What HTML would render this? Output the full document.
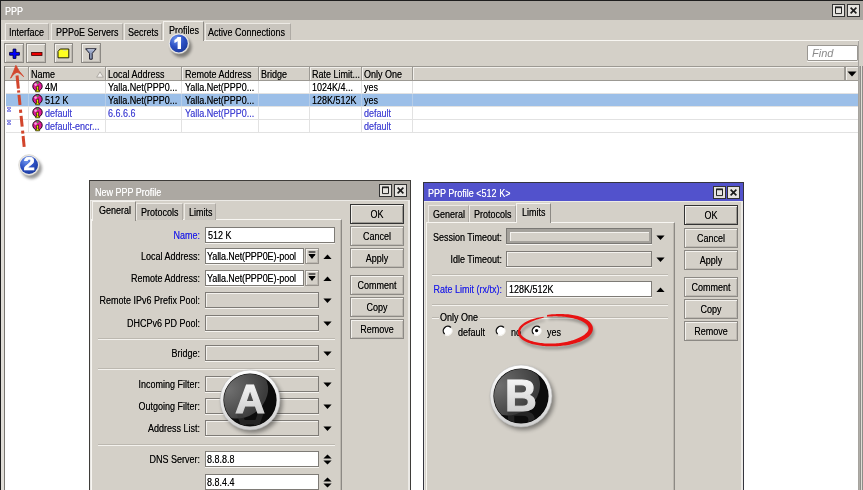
<!DOCTYPE html>
<html><head><meta charset="utf-8">
<style>
*{box-sizing:border-box;margin:0;padding:0}
html,body{width:863px;height:490px;overflow:hidden;background:#d4d0c8;position:relative}
body{will-change:transform}
div,span{position:absolute}
.t{font-family:"Liberation Sans",sans-serif;font-size:10px;line-height:12px;white-space:nowrap;color:#000;transform:scaleX(0.9);transform-origin:0 0;text-shadow:0 0 0.4px rgba(0,0,0,0.55)}
.w{color:#fff;text-shadow:0 0 0.5px rgba(255,255,255,0.7)}
.bl{color:#1c1ce8;text-shadow:0 0 0.5px rgba(28,28,232,0.6)}
.lk{color:#4444d4;text-shadow:0 0 0.5px rgba(68,68,212,0.6)}
.r{text-align:right;transform-origin:100% 0}
.c{text-align:center;transform-origin:50% 0}
.btn{border:1px solid #8c8984;box-shadow:inset 1px 1px 0 #f4f2ee,inset -1px -1px 0 #bdb9b2;background:#d4d0c8}
.tab{background:#c9c5be;border-top:1px solid #ece9e4;border-left:1px solid #ece9e4;border-right:1px solid #aeaaa4}
.tabA{background:#d4d0c8;border-top:1px solid #f4f2ee;border-left:1px solid #f4f2ee;border-right:1px solid #8c8984}
.in{background:#fff;border:1px solid #7e7b76;box-shadow:0 1px 0 #f6f4f0}
.dis{background:#d4d0c8;border:1px solid #7e7b76;box-shadow:inset 1px 1px 0 #f4f2ee,0 1px 0 #f6f4f0}
.sep{height:2px;border-top:1px solid #bcb8b0;border-bottom:1px solid #f4f2ee}
.tb{border:1px solid #3a3a3a;background:#d4d0c8;box-shadow:inset 1px 1px 0 #fff}
</style></head><body>

<!-- ============ MAIN PPP WINDOW ============ -->
<div style="left:0;top:0;width:863px;height:490px;border-top:1px solid #1e1e1e;border-left:1px solid #1e1e1e"></div>
<div style="left:1px;top:1px;width:862px;height:19px;background:#aca8a2"></div>
<div class="t w" style="left:5px;top:6px">PPP</div>
<svg style="position:absolute;left:832px;top:4px" width="13" height="13"><rect x="0.5" y="0.5" width="12" height="12" fill="#e6e4e0" stroke="#333" stroke-width="1"/><path d="M3.5 3.2 H9.5 V9.6 H3.5 Z" fill="none" stroke="#222" stroke-width="1"/><path d="M3 3.4 H10" stroke="#222" stroke-width="1.6"/></svg>
<svg style="position:absolute;left:847px;top:4px" width="13" height="13"><rect x="0.5" y="0.5" width="12" height="12" fill="#e6e4e0" stroke="#333" stroke-width="1"/><path d="M3.6 3.6 L9.4 9.4 M9.4 3.6 L3.6 9.4" stroke="#1a1a1a" stroke-width="1.6"/></svg>

<!-- tabs -->
<div style="left:1px;top:40px;width:858px;height:1px;background:#f8f6f2"></div>
<div class="tab" style="left:5px;top:23px;width:44px;height:17px"></div>
<div class="t" style="left:9px;top:27px">Interface</div>
<div class="tab" style="left:51px;top:23px;width:72px;height:17px"></div>
<div class="t" style="left:56px;top:27px">PPPoE Servers</div>
<div class="tab" style="left:124px;top:23px;width:38px;height:17px"></div>
<div class="t" style="left:128px;top:27px">Secrets</div>
<div class="tabA" style="left:163px;top:21px;width:41px;height:20px"></div>
<div class="t" style="left:169px;top:25px">Profiles</div>
<div class="tab" style="left:205px;top:23px;width:86px;height:17px"></div>
<div class="t" style="left:208px;top:27px">Active Connections</div>

<!-- toolbar -->
<div class="btn" style="left:4px;top:43px;width:20px;height:20px"></div>
<div class="btn" style="left:26px;top:43px;width:20px;height:20px"></div>
<div class="btn" style="left:54px;top:43px;width:19px;height:20px"></div>
<div class="btn" style="left:81px;top:43px;width:20px;height:20px"></div>
<div class="in" style="left:807px;top:45px;width:51px;height:16px;border-color:#9a9792;border-radius:1px"></div>
<div class="t" style="left:812px;top:47px;color:#8a8a8a;font-style:italic;font-size:11px;transform:none;text-shadow:none">Find</div>

<!-- table -->
<div style="left:1px;top:41px;width:3px;height:449px;background:#e0ddd7"></div>
<div style="left:4px;top:66px;width:854px;height:424px;background:#fff;border-left:1px solid #7a7772"></div>
<div style="left:858px;top:41px;width:1px;height:449px;background:#a6a39e"></div>
<div style="left:859px;top:66px;width:1px;height:424px;background:#b0aea8"></div>
<div style="left:860px;top:66px;width:1px;height:424px;background:#8e8c88"></div>
<div style="left:861px;top:66px;width:1px;height:424px;background:#e0ddd5"></div>
<div style="left:862px;top:66px;width:1px;height:424px;background:#8e8c88"></div>

<!--TOOLICONS-->
<svg style="position:absolute;left:9px;top:48px" width="12" height="12"><path d="M4.1 1.1 H6.9 V4.4 H10.4 V7.2 H6.9 V10.4 H4.1 V7.2 H0.6 V4.4 H4.1 Z" fill="#0000ff" stroke="#000040" stroke-width="0.9"/></svg>
<svg style="position:absolute;left:31px;top:52px" width="12" height="5"><rect x="0.6" y="0.4" width="10.4" height="3" fill="#ee0000" stroke="#400000" stroke-width="0.8"/></svg>
<svg style="position:absolute;left:57px;top:48px" width="13" height="11"><path d="M3.2 1 H11.8 V9.8 H1 V3.4 Z" fill="#ffff20" stroke="#202000" stroke-width="1"/><path d="M6 2.4 H10" stroke="#d8d8a0" stroke-width="0.8"/></svg>
<svg style="position:absolute;left:85px;top:48px" width="12" height="12"><path d="M0.6 0.8 H11.2 L7.2 5.4 V11.2 H4.6 V5.4 Z" fill="#9aa8c8" stroke="#1a1a2a" stroke-width="1"/><path d="M2.6 1.8 H9.2" stroke="#dfe6f4" stroke-width="0.8"/></svg>
<!--/TOOLICONS-->
<!--TABLE-->
<div style="left:5px;top:66px;width:853px;height:15px;background:#d4d0c8;border-top:1px solid #9c9993;border-bottom:1px solid #9c9993;box-shadow:inset 0 1px 0 #f2f0ec"></div>
<div style="left:28px;top:67px;width:1px;height:13px;background:#9c9993"></div>
<div style="left:29px;top:67px;width:1px;height:13px;background:#f2f0ec"></div>
<div style="left:105px;top:67px;width:1px;height:13px;background:#9c9993"></div>
<div style="left:106px;top:67px;width:1px;height:13px;background:#f2f0ec"></div>
<div style="left:181px;top:67px;width:1px;height:13px;background:#9c9993"></div>
<div style="left:182px;top:67px;width:1px;height:13px;background:#f2f0ec"></div>
<div style="left:258px;top:67px;width:1px;height:13px;background:#9c9993"></div>
<div style="left:259px;top:67px;width:1px;height:13px;background:#f2f0ec"></div>
<div style="left:309px;top:67px;width:1px;height:13px;background:#9c9993"></div>
<div style="left:310px;top:67px;width:1px;height:13px;background:#f2f0ec"></div>
<div style="left:361px;top:67px;width:1px;height:13px;background:#9c9993"></div>
<div style="left:362px;top:67px;width:1px;height:13px;background:#f2f0ec"></div>
<div style="left:412px;top:67px;width:1px;height:13px;background:#9c9993"></div>
<div style="left:413px;top:67px;width:1px;height:13px;background:#f2f0ec"></div>
<div style="left:844px;top:67px;width:1px;height:13px;background:#9c9993"></div>
<div style="left:845px;top:67px;width:1px;height:13px;background:#f2f0ec"></div>
<div style="left:28px;top:81px;width:1px;height:52px;background:#e2e2e2"></div>
<div style="left:105px;top:81px;width:1px;height:52px;background:#e2e2e2"></div>
<div style="left:181px;top:81px;width:1px;height:52px;background:#e2e2e2"></div>
<div style="left:258px;top:81px;width:1px;height:52px;background:#e2e2e2"></div>
<div style="left:309px;top:81px;width:1px;height:52px;background:#e2e2e2"></div>
<div style="left:361px;top:81px;width:1px;height:52px;background:#e2e2e2"></div>
<div style="left:412px;top:81px;width:1px;height:52px;background:#e2e2e2"></div>

<div style="left:6px;top:93px;width:852px;height:1px;background:#e2e2e2"></div>
<div style="left:6px;top:106px;width:852px;height:1px;background:#e2e2e2"></div>
<div style="left:6px;top:119px;width:852px;height:1px;background:#e2e2e2"></div>
<div style="left:6px;top:132px;width:852px;height:1px;background:#e2e2e2"></div>
<div style="left:6px;top:94px;width:852px;height:12px;background:#9cbfe8"></div>
<div style="left:28px;top:94px;width:1px;height:12px;background:#b6cde8"></div>
<div style="left:105px;top:94px;width:1px;height:12px;background:#b6cde8"></div>
<div style="left:181px;top:94px;width:1px;height:12px;background:#b6cde8"></div>
<div style="left:258px;top:94px;width:1px;height:12px;background:#b6cde8"></div>
<div style="left:309px;top:94px;width:1px;height:12px;background:#b6cde8"></div>
<div style="left:361px;top:94px;width:1px;height:12px;background:#b6cde8"></div>
<div style="left:412px;top:94px;width:1px;height:12px;background:#b6cde8"></div>

<div class="t" style="left:31px;top:69px">Name</div>
<div class="t" style="left:108px;top:69px">Local Address</div>
<div class="t" style="left:185px;top:69px">Remote Address</div>
<div class="t" style="left:261px;top:69px">Bridge</div>
<div class="t" style="left:312px;top:69px">Rate Limit...</div>
<div class="t" style="left:364px;top:69px">Only One</div>
<svg style="position:absolute;left:96px;top:71px" width="8" height="7"><path d="M4 0.8 L7.3 6.2 L0.7 6.2 Z" fill="#f4f2ee" stroke="#a8a49e" stroke-width="0.9"/></svg>
<div style="left:845px;top:67px;width:13px;height:13px;border-left:1px solid #9c9993;box-shadow:inset 1px 0 0 #f2f0ec"></div>
<svg style="position:absolute;left:847px;top:71px" width="10" height="6"><path d="M0.5 0.5 L9.5 0.5 L5 5.5 Z" fill="#000"/></svg>
<svg style="position:absolute;left:32px;top:81px" width="12" height="12"><circle cx="5.5" cy="5.3" r="4.7" fill="#e0189a" stroke="#1a0812" stroke-width="1"/><circle cx="3.6" cy="3.6" r="1.3" fill="#f8a0d8"/><circle cx="5.6" cy="2" r="1" fill="#3cb040"/><path d="M4.3 5.8 L6.4 4.8 L6.4 9.3 L7.6 9.3 L7.6 10.8 L3.6 10.8 L3.6 9.3 L4.8 9.3 L4.8 7.4 L4.3 7.6 Z" fill="#f8f400" stroke="#181800" stroke-width="0.7"/></svg>
<div class="t" style="left:45px;top:82px">4M</div>
<div class="t" style="left:108px;top:82px">Yalla.Net(PPP0...</div>
<div class="t" style="left:185px;top:82px">Yalla.Net(PPP0...</div>
<div class="t" style="left:312px;top:82px">1024K/4...</div>
<div class="t" style="left:364px;top:82px">yes</div>
<svg style="position:absolute;left:32px;top:94px" width="12" height="12"><circle cx="5.5" cy="5.3" r="4.7" fill="#e0189a" stroke="#1a0812" stroke-width="1"/><circle cx="3.6" cy="3.6" r="1.3" fill="#f8a0d8"/><circle cx="5.6" cy="2" r="1" fill="#3cb040"/><path d="M4.3 5.8 L6.4 4.8 L6.4 9.3 L7.6 9.3 L7.6 10.8 L3.6 10.8 L3.6 9.3 L4.8 9.3 L4.8 7.4 L4.3 7.6 Z" fill="#f8f400" stroke="#181800" stroke-width="0.7"/></svg>
<div class="t" style="left:45px;top:95px">512 K</div>
<div class="t" style="left:108px;top:95px">Yalla.Net(PPP0...</div>
<div class="t" style="left:185px;top:95px">Yalla.Net(PPP0...</div>
<div class="t" style="left:312px;top:95px">128K/512K</div>
<div class="t" style="left:364px;top:95px">yes</div>
<svg style="position:absolute;left:6px;top:107px" width="6" height="5"><path d="M1 0.8 L5 4.2 M5 0.8 L1 4.2 M1 0.8 H5 M1 4.2 H5" stroke="#7070e0" stroke-width="1"/></svg>
<svg style="position:absolute;left:32px;top:107px" width="12" height="12"><circle cx="5.5" cy="5.3" r="4.7" fill="#e0189a" stroke="#1a0812" stroke-width="1"/><circle cx="3.6" cy="3.6" r="1.3" fill="#f8a0d8"/><circle cx="5.6" cy="2" r="1" fill="#3cb040"/><path d="M4.3 5.8 L6.4 4.8 L6.4 9.3 L7.6 9.3 L7.6 10.8 L3.6 10.8 L3.6 9.3 L4.8 9.3 L4.8 7.4 L4.3 7.6 Z" fill="#f8f400" stroke="#181800" stroke-width="0.7"/></svg>
<div class="t lk" style="left:45px;top:108px">default</div>
<div class="t lk" style="left:108px;top:108px">6.6.6.6</div>
<div class="t lk" style="left:185px;top:108px">Yalla.Net(PPP0...</div>
<div class="t lk" style="left:364px;top:108px">default</div>
<svg style="position:absolute;left:6px;top:120px" width="6" height="5"><path d="M1 0.8 L5 4.2 M5 0.8 L1 4.2 M1 0.8 H5 M1 4.2 H5" stroke="#7070e0" stroke-width="1"/></svg>
<svg style="position:absolute;left:32px;top:120px" width="12" height="12"><circle cx="5.5" cy="5.3" r="4.7" fill="#e0189a" stroke="#1a0812" stroke-width="1"/><circle cx="3.6" cy="3.6" r="1.3" fill="#f8a0d8"/><circle cx="5.6" cy="2" r="1" fill="#3cb040"/><path d="M4.3 5.8 L6.4 4.8 L6.4 9.3 L7.6 9.3 L7.6 10.8 L3.6 10.8 L3.6 9.3 L4.8 9.3 L4.8 7.4 L4.3 7.6 Z" fill="#f8f400" stroke="#181800" stroke-width="0.7"/></svg>
<div class="t lk" style="left:45px;top:121px">default-encr...</div>
<div class="t lk" style="left:364px;top:121px">default</div>
<!--/TABLE-->
<!--MARKERS-->
<svg style="position:absolute;left:0;top:60px" width="40" height="95">
<path d="M17.05 15.50 L18.37 28.70 M18.53 30.30 L18.76 32.60 M18.99 34.90 L20.00 45.00 M20.47 49.70 L20.78 52.80 M21.09 55.90 L22.17 66.70 M22.56 70.60 L22.87 73.70 M23.10 76.00 L24.19 86.90" stroke="#d2452c" stroke-width="3" fill="none"/>
<path d="M10.6 18.2 Q14.2 10.5 15.9 5.4 Q18.6 11.2 23.6 16.6 Q19.6 12.4 17 12.2 Q13.8 13.2 10.6 18.2 Z" fill="#d2452c" stroke="#d2452c" stroke-width="0.9" stroke-linejoin="round"/>
</svg>
<svg style="position:absolute;left:165px;top:30px" width="32" height="32"><g transform="translate(-0.2,-0.6)">
<defs><radialGradient id="g1" cx="35%" cy="25%" r="80%"><stop offset="0" stop-color="#6f96ee"/><stop offset="0.55" stop-color="#2c50c4"/><stop offset="1" stop-color="#1c3a9c"/></radialGradient>
<filter id="f1" x="-50%" y="-50%" width="200%" height="200%"><feGaussianBlur stdDeviation="1.5"/></filter></defs>
<circle cx="16.5" cy="17.5" r="10.4" fill="#000" opacity="0.4" filter="url(#f1)"/>
<circle cx="14" cy="14" r="10.4" fill="#eceae6" stroke="#c8c6c0" stroke-width="0.5"/>
<circle cx="14" cy="14" r="9.0" fill="url(#g1)"/>
<path d="M12.8 7.6 H16.2 V19.6 H12.8 V11.8 Q11.3 13 9.6 13.5 V10.6 Q11.9 9.6 12.8 7.6 Z" fill="#fff"/>
</g></svg>
<svg style="position:absolute;left:15px;top:151px" width="32" height="32">
<defs><radialGradient id="g2" cx="35%" cy="25%" r="80%"><stop offset="0" stop-color="#6f96ee"/><stop offset="0.55" stop-color="#2c50c4"/><stop offset="1" stop-color="#1c3a9c"/></radialGradient>
<filter id="f2" x="-50%" y="-50%" width="200%" height="200%"><feGaussianBlur stdDeviation="1.5"/></filter></defs>
<circle cx="16.5" cy="17.5" r="10.4" fill="#000" opacity="0.4" filter="url(#f2)"/>
<circle cx="14" cy="14" r="10.4" fill="#eceae6" stroke="#c8c6c0" stroke-width="0.5"/>
<circle cx="14" cy="14" r="9.0" fill="url(#g2)"/>
<text x="14.2" y="19.4" text-anchor="middle" font-family="Liberation Sans" font-weight="bold" font-size="17.5" fill="#fff" stroke="#fff" stroke-width="0.7" transform="translate(14.2 14) scale(1.12 1) translate(-14.2 -14)">2</text>
</svg>
<!--/MARKERS-->
<!--DLGA-->
<div style="left:89px;top:180px;width:322px;height:320px;background:#d4d0c8;border:1px solid #3e3c39;box-shadow:inset 1px 1px 0 #e8e6e2,inset -2px 0 0 #eceae6"></div>
<div style="left:90px;top:181px;width:320px;height:19px;background:#aca8a2"></div>
<div class="t w" style="left:95px;top:187px">New PPP Profile</div>
<div style="left:90px;top:200px;width:320px;height:1px;background:#eceae6"></div>
<svg style="position:absolute;left:379px;top:184px" width="13" height="13"><rect x="0.5" y="0.5" width="12" height="12" fill="#e6e4e0" stroke="#333" stroke-width="1"/><path d="M3.5 3.2 H9.5 V9.6 H3.5 Z" fill="none" stroke="#222" stroke-width="1"/><path d="M3 3.4 H10" stroke="#222" stroke-width="1.6"/></svg>
<svg style="position:absolute;left:394px;top:184px" width="13" height="13"><rect x="0.5" y="0.5" width="12" height="12" fill="#e6e4e0" stroke="#333" stroke-width="1"/><path d="M3.6 3.6 L9.4 9.4 M9.4 3.6 L3.6 9.4" stroke="#1a1a1a" stroke-width="1.6"/></svg>
<div style="left:91px;top:219px;width:251px;height:290px;border-top:1px solid #f8f6f2;border-left:1px solid #f8f6f2;border-right:1px solid #8c8984;box-shadow:inset -1px 0 0 #bcb8b0"></div>
<div class="tabA" style="left:92px;top:201px;width:44px;height:20px"></div>
<div class="t" style="left:99px;top:205px">General</div>
<div class="tab" style="left:136px;top:203px;width:47px;height:17px"></div>
<div class="t" style="left:141px;top:207px">Protocols</div>
<div class="tab" style="left:184px;top:203px;width:32px;height:17px"></div>
<div class="t" style="left:189px;top:207px">Limits</div>
<div class="t bl r" style="left:50px;top:230px;width:150px">Name:</div>
<div class="in" style="left:205px;top:227px;width:130px;height:16px"></div>
<div class="t" style="left:208px;top:230px">512 K</div>
<div class="t r" style="left:50px;top:251px;width:150px">Local Address:</div>
<div class="in" style="left:205px;top:248px;width:99px;height:16px"></div>
<div class="t" style="left:207px;top:251px;letter-spacing:-0.1px">Yalla.Net(PPP0E)-pool</div>
<div class="btn" style="left:305px;top:248px;width:14px;height:16px;border-color:#96928c"></div>
<svg style="position:absolute;left:307px;top:251px" width="10" height="10"><path d="M1.6 1 H8.4" stroke="#222" stroke-width="1.3"/><path d="M1.4 3 H8.6 L5 8 Z M3 3 H7" fill="#000"/><path d="M2.2 4.2 H7.8" stroke="#000" stroke-width="1.2"/></svg>
<svg style="position:absolute;left:323px;top:254px" width="10" height="6"><path d="M0.4 5 L8.6 5 L4.5 0.6 Z" fill="#000"/></svg>
<div class="t r" style="left:50px;top:273px;width:150px">Remote Address:</div>
<div class="in" style="left:205px;top:270px;width:99px;height:16px"></div>
<div class="t" style="left:207px;top:273px;letter-spacing:-0.1px">Yalla.Net(PPP0E)-pool</div>
<div class="btn" style="left:305px;top:270px;width:14px;height:16px;border-color:#96928c"></div>
<svg style="position:absolute;left:307px;top:273px" width="10" height="10"><path d="M1.6 1 H8.4" stroke="#222" stroke-width="1.3"/><path d="M1.4 3 H8.6 L5 8 Z M3 3 H7" fill="#000"/><path d="M2.2 4.2 H7.8" stroke="#000" stroke-width="1.2"/></svg>
<svg style="position:absolute;left:323px;top:276px" width="10" height="6"><path d="M0.4 5 L8.6 5 L4.5 0.6 Z" fill="#000"/></svg>
<div class="t r" style="left:50px;top:295px;width:150px">Remote IPv6 Prefix Pool:</div>
<div class="dis" style="left:205px;top:292px;width:114px;height:16px"></div>
<svg style="position:absolute;left:323px;top:298px" width="10" height="6"><path d="M0.4 0.6 L8.6 0.6 L4.5 5 Z" fill="#000"/></svg>
<div class="t r" style="left:50px;top:318px;width:150px">DHCPv6 PD Pool:</div>
<div class="dis" style="left:205px;top:315px;width:114px;height:16px"></div>
<svg style="position:absolute;left:323px;top:321px" width="10" height="6"><path d="M0.4 0.6 L8.6 0.6 L4.5 5 Z" fill="#000"/></svg>
<div class="t r" style="left:50px;top:348px;width:150px">Bridge:</div>
<div class="dis" style="left:205px;top:345px;width:114px;height:16px"></div>
<svg style="position:absolute;left:323px;top:351px" width="10" height="6"><path d="M0.4 0.6 L8.6 0.6 L4.5 5 Z" fill="#000"/></svg>
<div class="t r" style="left:50px;top:379px;width:150px">Incoming Filter:</div>
<div class="dis" style="left:205px;top:376px;width:114px;height:16px"></div>
<svg style="position:absolute;left:323px;top:382px" width="10" height="6"><path d="M0.4 0.6 L8.6 0.6 L4.5 5 Z" fill="#000"/></svg>
<div class="t r" style="left:50px;top:401px;width:150px">Outgoing Filter:</div>
<div class="dis" style="left:205px;top:398px;width:114px;height:16px"></div>
<svg style="position:absolute;left:323px;top:404px" width="10" height="6"><path d="M0.4 0.6 L8.6 0.6 L4.5 5 Z" fill="#000"/></svg>
<div class="t r" style="left:50px;top:423px;width:150px">Address List:</div>
<div class="dis" style="left:205px;top:420px;width:114px;height:16px"></div>
<svg style="position:absolute;left:323px;top:426px" width="10" height="6"><path d="M0.4 0.6 L8.6 0.6 L4.5 5 Z" fill="#000"/></svg>
<div class="sep" style="left:98px;top:338px;width:237px"></div>
<div class="sep" style="left:98px;top:368px;width:237px"></div>
<div class="sep" style="left:98px;top:444px;width:237px"></div>
<div class="t r" style="left:50px;top:454px;width:150px">DNS Server:</div>
<div class="in" style="left:205px;top:451px;width:114px;height:16px"></div>
<div class="t" style="left:207px;top:454px">8.8.8.8</div>
<svg style="position:absolute;left:323px;top:454px" width="10" height="12"><path d="M0.4 4.5 L8.6 4.5 L4.5 0.4 Z M0.4 6.5 L8.6 6.5 L4.5 10.6 Z" fill="#000"/></svg>
<div class="in" style="left:205px;top:474px;width:114px;height:16px"></div>
<div class="t" style="left:207px;top:477px">8.8.4.4</div>
<svg style="position:absolute;left:323px;top:477px" width="10" height="12"><path d="M0.4 4.5 L8.6 4.5 L4.5 0.4 Z M0.4 6.5 L8.6 6.5 L4.5 10.6 Z" fill="#000"/></svg>
<div class="btn" style="left:350px;top:204px;width:54px;height:20px;border-color:#333;box-shadow:inset 1px 1px 0 #f4f2ee,inset -1px -1px 0 #9c9993"></div>
<div class="t c" style="left:350px;top:209px;width:54px">OK</div>
<div class="btn" style="left:350px;top:226px;width:54px;height:20px;"></div>
<div class="t c" style="left:350px;top:231px;width:54px">Cancel</div>
<div class="btn" style="left:350px;top:248px;width:54px;height:20px;"></div>
<div class="t c" style="left:350px;top:253px;width:54px">Apply</div>
<div class="btn" style="left:350px;top:275px;width:54px;height:20px;"></div>
<div class="t c" style="left:350px;top:280px;width:54px">Comment</div>
<div class="btn" style="left:350px;top:297px;width:54px;height:20px;"></div>
<div class="t c" style="left:350px;top:302px;width:54px">Copy</div>
<div class="btn" style="left:350px;top:319px;width:54px;height:20px;"></div>
<div class="t c" style="left:350px;top:324px;width:54px">Remove</div>
<!--/DLGA-->
<!--DLGB-->
<div style="left:423px;top:182px;width:321px;height:320px;background:#d4d0c8;border:1px solid #34343e;box-shadow:inset 1px 1px 0 #e8e6e2,inset -2px 0 0 #eceae6"></div>
<div style="left:424px;top:183px;width:319px;height:18px;background:#5252cc"></div>
<div class="t w" style="left:428px;top:188px">PPP Profile &lt;512 K&gt;</div>
<div style="left:424px;top:201px;width:319px;height:1px;background:#ecebe6"></div>
<svg style="position:absolute;left:713px;top:186px" width="13" height="13"><rect x="0.5" y="0.5" width="12" height="12" fill="#e6e4e0" stroke="#333" stroke-width="1"/><path d="M3.5 3.2 H9.5 V9.6 H3.5 Z" fill="none" stroke="#222" stroke-width="1"/><path d="M3 3.4 H10" stroke="#222" stroke-width="1.6"/></svg>
<svg style="position:absolute;left:727px;top:186px" width="13" height="13"><rect x="0.5" y="0.5" width="12" height="12" fill="#e6e4e0" stroke="#333" stroke-width="1"/><path d="M3.6 3.6 L9.4 9.4 M9.4 3.6 L3.6 9.4" stroke="#1a1a1a" stroke-width="1.6"/></svg>
<div style="left:426px;top:222px;width:249px;height:290px;border-top:1px solid #f8f6f2;border-left:1px solid #f8f6f2;border-right:1px solid #8c8984;box-shadow:inset -1px 0 0 #bcb8b0"></div>
<div class="tab" style="left:428px;top:205px;width:41px;height:17px"></div>
<div class="t" style="left:433px;top:209px">General</div>
<div class="tab" style="left:469px;top:205px;width:47px;height:17px"></div>
<div class="t" style="left:474px;top:209px">Protocols</div>
<div class="tabA" style="left:516px;top:203px;width:35px;height:20px"></div>
<div class="t" style="left:522px;top:207px">Limits</div>
<div class="t r" style="left:352px;top:232px;width:150px">Session Timeout:</div>
<div style="left:506px;top:228px;width:146px;height:16px;background:#d4d0c8;border:1px solid #7a7874;box-shadow:inset 0 0 0 2px #a4a19b,inset 3px 3px 0 #a4a19b,inset 4px 4px 0 #f4f2ee,0 1px 0 #f6f4f0"></div>
<svg style="position:absolute;left:656px;top:235px" width="10" height="6"><path d="M0.4 0.6 L8.6 0.6 L4.5 5 Z" fill="#000"/></svg>
<div class="t r" style="left:352px;top:254px;width:150px">Idle Timeout:</div>
<div class="dis" style="left:506px;top:251px;width:146px;height:16px"></div>
<svg style="position:absolute;left:656px;top:257px" width="10" height="6"><path d="M0.4 0.6 L8.6 0.6 L4.5 5 Z" fill="#000"/></svg>
<div class="sep" style="left:432px;top:274px;width:236px"></div>
<div class="t bl r" style="left:352px;top:284px;width:150px">Rate Limit (rx/tx):</div>
<div class="in" style="left:506px;top:281px;width:146px;height:16px"></div>
<div class="t" style="left:509px;top:284px">128K/512K</div>
<svg style="position:absolute;left:656px;top:287px" width="10" height="6"><path d="M0.4 5 L8.6 5 L4.5 0.6 Z" fill="#000"/></svg>
<div class="sep" style="left:432px;top:304px;width:236px"></div>
<div style="left:432px;top:317px;width:7px;height:2px;border-top:1px solid #bcb8b0;border-bottom:1px solid #f4f2ee"></div>
<div style="left:480px;top:317px;width:188px;height:2px;border-top:1px solid #bcb8b0;border-bottom:1px solid #f4f2ee"></div>
<div class="t" style="left:440px;top:312px">Only One</div>
<svg style="position:absolute;left:441px;top:325px" width="12" height="12"><circle cx="6.6" cy="5.6" r="4.5" fill="#fff"/><path d="M3.6 9 A4.4 4.4 0 0 1 9.9 2.6" stroke="#111" stroke-width="1.4" fill="none"/><path d="M10.8 4 A4.8 4.8 0 0 1 4 10" stroke="#f8f6f2" stroke-width="1" fill="none"/></svg>
<div class="t" style="left:458px;top:327px">default</div>
<svg style="position:absolute;left:494px;top:325px" width="12" height="12"><circle cx="6.6" cy="5.6" r="4.5" fill="#fff"/><path d="M3.6 9 A4.4 4.4 0 0 1 9.9 2.6" stroke="#111" stroke-width="1.4" fill="none"/><path d="M10.8 4 A4.8 4.8 0 0 1 4 10" stroke="#f8f6f2" stroke-width="1" fill="none"/></svg>
<div class="t" style="left:511px;top:327px">no</div>
<svg style="position:absolute;left:530px;top:325px" width="12" height="12"><circle cx="6.6" cy="5.6" r="4.5" fill="#fff"/><path d="M3.6 9 A4.4 4.4 0 0 1 9.9 2.6" stroke="#111" stroke-width="1.4" fill="none"/><path d="M10.8 4 A4.8 4.8 0 0 1 4 10" stroke="#f8f6f2" stroke-width="1" fill="none"/><circle cx="6.6" cy="5.6" r="1.6" fill="#000"/></svg>
<div class="t" style="left:547px;top:327px">yes</div>
<div class="btn" style="left:684px;top:205px;width:54px;height:20px;border-color:#333;box-shadow:inset 1px 1px 0 #f4f2ee,inset -1px -1px 0 #9c9993"></div>
<div class="t c" style="left:684px;top:210px;width:54px">OK</div>
<div class="btn" style="left:684px;top:228px;width:54px;height:20px;"></div>
<div class="t c" style="left:684px;top:233px;width:54px">Cancel</div>
<div class="btn" style="left:684px;top:250px;width:54px;height:20px;"></div>
<div class="t c" style="left:684px;top:255px;width:54px">Apply</div>
<div class="btn" style="left:684px;top:277px;width:54px;height:20px;"></div>
<div class="t c" style="left:684px;top:282px;width:54px">Comment</div>
<div class="btn" style="left:684px;top:299px;width:54px;height:20px;"></div>
<div class="t c" style="left:684px;top:304px;width:54px">Copy</div>
<div class="btn" style="left:684px;top:321px;width:54px;height:20px;"></div>
<div class="t c" style="left:684px;top:326px;width:54px">Remove</div>
<!--/DLGB-->
<!--BADGES-->
<svg style="position:absolute;left:214px;top:364px;will-change:transform" width="76" height="76">
<defs>
<linearGradient id="ringa" x1="0" y1="0" x2="0" y2="1"><stop offset="0" stop-color="#ffffff"/><stop offset="1" stop-color="#d0d0d0"/></linearGradient>
<radialGradient id="gla" cx="35%" cy="30%" r="70%"><stop offset="0" stop-color="#707070"/><stop offset="0.7" stop-color="#4c4c4c"/><stop offset="1" stop-color="#3c3c3c"/></radialGradient>
<linearGradient id="lta" x1="0" y1="0" x2="0" y2="1"><stop offset="0" stop-color="#ffffff"/><stop offset="1" stop-color="#c4c4c4"/></linearGradient>
<clipPath id="cpa"><circle cx="36" cy="36" r="26"/></clipPath>
<filter id="bsa" x="-30%" y="-30%" width="160%" height="160%"><feGaussianBlur stdDeviation="2.2"/></filter>
</defs>
<circle cx="38.5" cy="39" r="30" fill="#000" opacity="0.4" filter="url(#bsa)"/>
<circle cx="36" cy="36" r="30" fill="url(#ringa)" stroke="#b8b8b8" stroke-width="0.6"/>
<circle cx="36" cy="36" r="26.6" fill="#050505"/>
<g clip-path="url(#cpa)">
<circle cx="36" cy="36" r="30" fill="#0c0c0c"/>
<ellipse cx="27" cy="29" rx="28.5" ry="24.0" transform="rotate(-35 27 29)" fill="url(#gla)"/>
<text x="36" y="48.8" text-anchor="middle" font-family="Liberation Sans" font-weight="bold" font-size="41" fill="#3a3a3a" opacity="0.55" transform="translate(0,97.6) scale(1,-1)">A</text>
</g>
<text x="36" y="48.8" text-anchor="middle" font-family="Liberation Sans" font-weight="bold" font-size="41" fill="url(#lta)" stroke="url(#lta)" stroke-width="1.2">A</text>
</svg>
<svg style="position:absolute;left:484px;top:359px;will-change:transform" width="78" height="78">
<defs>
<linearGradient id="ringb" x1="0" y1="0" x2="0" y2="1"><stop offset="0" stop-color="#ffffff"/><stop offset="1" stop-color="#d0d0d0"/></linearGradient>
<radialGradient id="glb" cx="35%" cy="30%" r="70%"><stop offset="0" stop-color="#707070"/><stop offset="0.7" stop-color="#4c4c4c"/><stop offset="1" stop-color="#3c3c3c"/></radialGradient>
<linearGradient id="ltb" x1="0" y1="0" x2="0" y2="1"><stop offset="0" stop-color="#ffffff"/><stop offset="1" stop-color="#c4c4c4"/></linearGradient>
<clipPath id="cpb"><circle cx="37" cy="37" r="27"/></clipPath>
<filter id="bsb" x="-30%" y="-30%" width="160%" height="160%"><feGaussianBlur stdDeviation="2.2"/></filter>
</defs>
<circle cx="39.5" cy="40" r="31" fill="#000" opacity="0.4" filter="url(#bsb)"/>
<circle cx="37" cy="37" r="31" fill="url(#ringb)" stroke="#b8b8b8" stroke-width="0.6"/>
<circle cx="37" cy="37" r="27.6" fill="#050505"/>
<g clip-path="url(#cpb)">
<circle cx="37" cy="37" r="31" fill="#0c0c0c"/>
<ellipse cx="28" cy="30" rx="29.45" ry="24.8" transform="rotate(-35 28 30)" fill="url(#glb)"/>
<text x="37" y="52.2" text-anchor="middle" font-family="Liberation Sans" font-weight="bold" font-size="44" fill="#3a3a3a" opacity="0.55" transform="translate(0,104.4) scale(1,-1)">B</text>
</g>
<text x="37" y="52.2" text-anchor="middle" font-family="Liberation Sans" font-weight="bold" font-size="44" fill="url(#ltb)" stroke="url(#ltb)" stroke-width="1.2">B</text>
</svg>
<svg style="position:absolute;left:510px;top:308px" width="92" height="46">
<defs><filter id="es" x="-20%" y="-50%" width="140%" height="200%"><feGaussianBlur stdDeviation="1.6"/></filter></defs>
<path d="M36.99 7.01 L38.61 6.76 L40.24 6.54 L41.88 6.35 L43.52 6.25 L45.17 6.15 L46.81 6.07 L48.45 6.02 L50.08 6.01 L51.71 6.02 L53.31 6.06 L54.91 6.13 L56.48 6.23 L58.03 6.36 L59.55 6.52 L61.05 6.71 L62.51 6.93 L63.94 7.18 L65.34 7.45 L66.70 7.76 L68.02 8.09 L69.30 8.45 L70.53 8.83 L71.71 9.25 L72.85 9.69 L73.94 10.15 L74.98 10.65 L75.96 11.17 L76.89 11.72 L77.76 12.29 L78.58 12.90 L79.33 13.53 L80.02 14.20 L80.65 14.90 L81.21 15.63 L81.70 16.39 L82.11 17.19 L82.44 18.01 L82.68 18.86 L82.82 19.74 L82.87 20.62 L82.82 21.51 L82.68 22.38 L82.44 23.25 L82.12 24.10 L81.71 24.92 L81.22 25.72 L80.67 26.49 L80.04 27.24 L79.35 27.96 L78.60 28.65 L77.79 29.33 L76.92 29.98 L75.99 30.60 L75.01 31.21 L73.97 31.79 L72.89 32.35 L71.76 32.89 L70.57 33.40 L69.35 33.89 L68.08 34.36 L66.77 34.80 L65.42 35.22 L64.03 35.61 L62.62 35.97 L61.17 36.31 L59.69 36.63 L58.18 36.91 L56.66 37.17 L55.11 37.40 L53.54 37.60 L51.97 37.78 L50.38 37.92 L48.78 38.04 L47.17 38.13 L45.57 38.18 L43.96 38.24 L42.36 38.29 L40.76 38.30 L39.17 38.28 L37.59 38.24 L36.03 38.16 L34.48 38.06 L32.95 37.93 L31.45 37.77 L29.97 37.58 L28.51 37.36 L27.09 37.12 L25.71 36.85 L24.35 36.55 L23.04 36.22 L21.77 35.88 L20.54 35.50 L19.35 35.10 L18.21 34.68 L17.12 34.23 L16.08 33.76 L15.09 33.27 L14.16 32.75 L13.29 32.21 L12.47 31.65 L11.70 31.07 L11.00 30.47 L10.37 29.84 L9.79 29.20 L9.28 28.53 L8.84 27.84 L8.48 27.14 L8.18 26.41 L7.97 25.67 L7.83 24.92 L7.78 24.15 L7.81 23.39 L7.92 22.63 L8.11 21.88 L8.38 21.14 L8.72 20.41 L9.14 19.70 L9.62 19.01 L10.16 18.33 L10.77 17.66 L11.44 17.01 L12.17 16.38 L12.96 15.77 L13.80 15.17 L14.70 14.59 L15.65 14.02 L16.66 13.47 L17.71 12.94 L18.81 12.43 L19.96 11.94 L21.17 11.52 L22.42 11.13 L23.70 10.76 L25.03 10.41 L26.38 10.08 L27.76 9.77 L29.17 9.49 L30.61 9.24 L32.07 9.01 L33.55 8.80 L33.71 9.74 L32.27 10.06 L30.86 10.40 L29.47 10.77 L28.12 11.16 L26.80 11.57 L25.52 12.01 L24.27 12.46 L23.07 12.94 L21.91 13.43 L20.80 13.94 L19.72 14.42 L18.69 14.91 L17.70 15.41 L16.77 15.93 L15.90 16.46 L15.09 17.00 L14.33 17.55 L13.64 18.10 L13.00 18.66 L12.44 19.22 L11.93 19.79 L11.50 20.35 L11.12 20.90 L10.82 21.45 L10.57 21.99 L10.39 22.52 L10.26 23.03 L10.19 23.55 L10.18 24.05 L10.22 24.55 L10.31 25.05 L10.46 25.55 L10.67 26.05 L10.95 26.56 L11.28 27.06 L11.68 27.57 L12.14 28.08 L12.67 28.58 L13.26 29.08 L13.92 29.57 L14.64 30.05 L15.42 30.52 L16.26 30.97 L17.16 31.41 L18.12 31.84 L19.13 32.24 L20.20 32.63 L21.31 33.00 L22.47 33.34 L23.68 33.67 L24.93 33.97 L26.23 34.24 L27.55 34.50 L28.92 34.73 L30.32 34.93 L31.74 35.11 L33.19 35.26 L34.67 35.38 L36.17 35.48 L37.68 35.55 L39.21 35.59 L40.75 35.60 L42.30 35.59 L43.85 35.55 L45.41 35.47 L46.96 35.33 L48.51 35.16 L50.05 34.97 L51.57 34.75 L53.08 34.51 L54.58 34.24 L56.05 33.94 L57.50 33.63 L58.92 33.28 L60.31 32.92 L61.67 32.53 L62.99 32.13 L64.27 31.70 L65.52 31.25 L66.72 30.79 L67.87 30.31 L68.97 29.82 L70.02 29.31 L71.02 28.79 L71.96 28.26 L72.84 27.72 L73.66 27.18 L74.42 26.63 L75.11 26.08 L75.74 25.53 L76.30 24.98 L76.80 24.45 L77.23 23.92 L77.59 23.40 L77.89 22.91 L78.13 22.42 L78.31 21.96 L78.45 21.52 L78.53 21.09 L78.57 20.67 L78.56 20.25 L78.51 19.82 L78.42 19.39 L78.27 18.95 L78.06 18.49 L77.79 18.01 L77.46 17.53 L77.06 17.03 L76.59 16.52 L76.05 16.02 L75.45 15.51 L74.77 15.00 L74.02 14.50 L73.21 14.01 L72.34 13.53 L71.40 13.06 L70.40 12.61 L69.35 12.18 L68.24 11.76 L67.08 11.36 L65.86 10.98 L64.60 10.63 L63.30 10.29 L61.95 9.98 L60.57 9.70 L59.15 9.44 L57.69 9.20 L56.21 9.00 L54.70 8.82 L53.16 8.67 L51.61 8.54 L50.03 8.45 L48.45 8.38 L46.85 8.34 L45.24 8.33 L43.63 8.35 L42.02 8.44 L40.41 8.50 L38.80 8.57 L37.20 8.68 Z" fill="#000" opacity="0.32" filter="url(#es)" transform="translate(1.5,3)"/>
<path d="M36.99 7.01 L38.61 6.76 L40.24 6.54 L41.88 6.35 L43.52 6.25 L45.17 6.15 L46.81 6.07 L48.45 6.02 L50.08 6.01 L51.71 6.02 L53.31 6.06 L54.91 6.13 L56.48 6.23 L58.03 6.36 L59.55 6.52 L61.05 6.71 L62.51 6.93 L63.94 7.18 L65.34 7.45 L66.70 7.76 L68.02 8.09 L69.30 8.45 L70.53 8.83 L71.71 9.25 L72.85 9.69 L73.94 10.15 L74.98 10.65 L75.96 11.17 L76.89 11.72 L77.76 12.29 L78.58 12.90 L79.33 13.53 L80.02 14.20 L80.65 14.90 L81.21 15.63 L81.70 16.39 L82.11 17.19 L82.44 18.01 L82.68 18.86 L82.82 19.74 L82.87 20.62 L82.82 21.51 L82.68 22.38 L82.44 23.25 L82.12 24.10 L81.71 24.92 L81.22 25.72 L80.67 26.49 L80.04 27.24 L79.35 27.96 L78.60 28.65 L77.79 29.33 L76.92 29.98 L75.99 30.60 L75.01 31.21 L73.97 31.79 L72.89 32.35 L71.76 32.89 L70.57 33.40 L69.35 33.89 L68.08 34.36 L66.77 34.80 L65.42 35.22 L64.03 35.61 L62.62 35.97 L61.17 36.31 L59.69 36.63 L58.18 36.91 L56.66 37.17 L55.11 37.40 L53.54 37.60 L51.97 37.78 L50.38 37.92 L48.78 38.04 L47.17 38.13 L45.57 38.18 L43.96 38.24 L42.36 38.29 L40.76 38.30 L39.17 38.28 L37.59 38.24 L36.03 38.16 L34.48 38.06 L32.95 37.93 L31.45 37.77 L29.97 37.58 L28.51 37.36 L27.09 37.12 L25.71 36.85 L24.35 36.55 L23.04 36.22 L21.77 35.88 L20.54 35.50 L19.35 35.10 L18.21 34.68 L17.12 34.23 L16.08 33.76 L15.09 33.27 L14.16 32.75 L13.29 32.21 L12.47 31.65 L11.70 31.07 L11.00 30.47 L10.37 29.84 L9.79 29.20 L9.28 28.53 L8.84 27.84 L8.48 27.14 L8.18 26.41 L7.97 25.67 L7.83 24.92 L7.78 24.15 L7.81 23.39 L7.92 22.63 L8.11 21.88 L8.38 21.14 L8.72 20.41 L9.14 19.70 L9.62 19.01 L10.16 18.33 L10.77 17.66 L11.44 17.01 L12.17 16.38 L12.96 15.77 L13.80 15.17 L14.70 14.59 L15.65 14.02 L16.66 13.47 L17.71 12.94 L18.81 12.43 L19.96 11.94 L21.17 11.52 L22.42 11.13 L23.70 10.76 L25.03 10.41 L26.38 10.08 L27.76 9.77 L29.17 9.49 L30.61 9.24 L32.07 9.01 L33.55 8.80 L33.71 9.74 L32.27 10.06 L30.86 10.40 L29.47 10.77 L28.12 11.16 L26.80 11.57 L25.52 12.01 L24.27 12.46 L23.07 12.94 L21.91 13.43 L20.80 13.94 L19.72 14.42 L18.69 14.91 L17.70 15.41 L16.77 15.93 L15.90 16.46 L15.09 17.00 L14.33 17.55 L13.64 18.10 L13.00 18.66 L12.44 19.22 L11.93 19.79 L11.50 20.35 L11.12 20.90 L10.82 21.45 L10.57 21.99 L10.39 22.52 L10.26 23.03 L10.19 23.55 L10.18 24.05 L10.22 24.55 L10.31 25.05 L10.46 25.55 L10.67 26.05 L10.95 26.56 L11.28 27.06 L11.68 27.57 L12.14 28.08 L12.67 28.58 L13.26 29.08 L13.92 29.57 L14.64 30.05 L15.42 30.52 L16.26 30.97 L17.16 31.41 L18.12 31.84 L19.13 32.24 L20.20 32.63 L21.31 33.00 L22.47 33.34 L23.68 33.67 L24.93 33.97 L26.23 34.24 L27.55 34.50 L28.92 34.73 L30.32 34.93 L31.74 35.11 L33.19 35.26 L34.67 35.38 L36.17 35.48 L37.68 35.55 L39.21 35.59 L40.75 35.60 L42.30 35.59 L43.85 35.55 L45.41 35.47 L46.96 35.33 L48.51 35.16 L50.05 34.97 L51.57 34.75 L53.08 34.51 L54.58 34.24 L56.05 33.94 L57.50 33.63 L58.92 33.28 L60.31 32.92 L61.67 32.53 L62.99 32.13 L64.27 31.70 L65.52 31.25 L66.72 30.79 L67.87 30.31 L68.97 29.82 L70.02 29.31 L71.02 28.79 L71.96 28.26 L72.84 27.72 L73.66 27.18 L74.42 26.63 L75.11 26.08 L75.74 25.53 L76.30 24.98 L76.80 24.45 L77.23 23.92 L77.59 23.40 L77.89 22.91 L78.13 22.42 L78.31 21.96 L78.45 21.52 L78.53 21.09 L78.57 20.67 L78.56 20.25 L78.51 19.82 L78.42 19.39 L78.27 18.95 L78.06 18.49 L77.79 18.01 L77.46 17.53 L77.06 17.03 L76.59 16.52 L76.05 16.02 L75.45 15.51 L74.77 15.00 L74.02 14.50 L73.21 14.01 L72.34 13.53 L71.40 13.06 L70.40 12.61 L69.35 12.18 L68.24 11.76 L67.08 11.36 L65.86 10.98 L64.60 10.63 L63.30 10.29 L61.95 9.98 L60.57 9.70 L59.15 9.44 L57.69 9.20 L56.21 9.00 L54.70 8.82 L53.16 8.67 L51.61 8.54 L50.03 8.45 L48.45 8.38 L46.85 8.34 L45.24 8.33 L43.63 8.35 L42.02 8.44 L40.41 8.50 L38.80 8.57 L37.20 8.68 Z" fill="#e81212"/>
</svg>
<!--/BADGES-->
</body></html>
